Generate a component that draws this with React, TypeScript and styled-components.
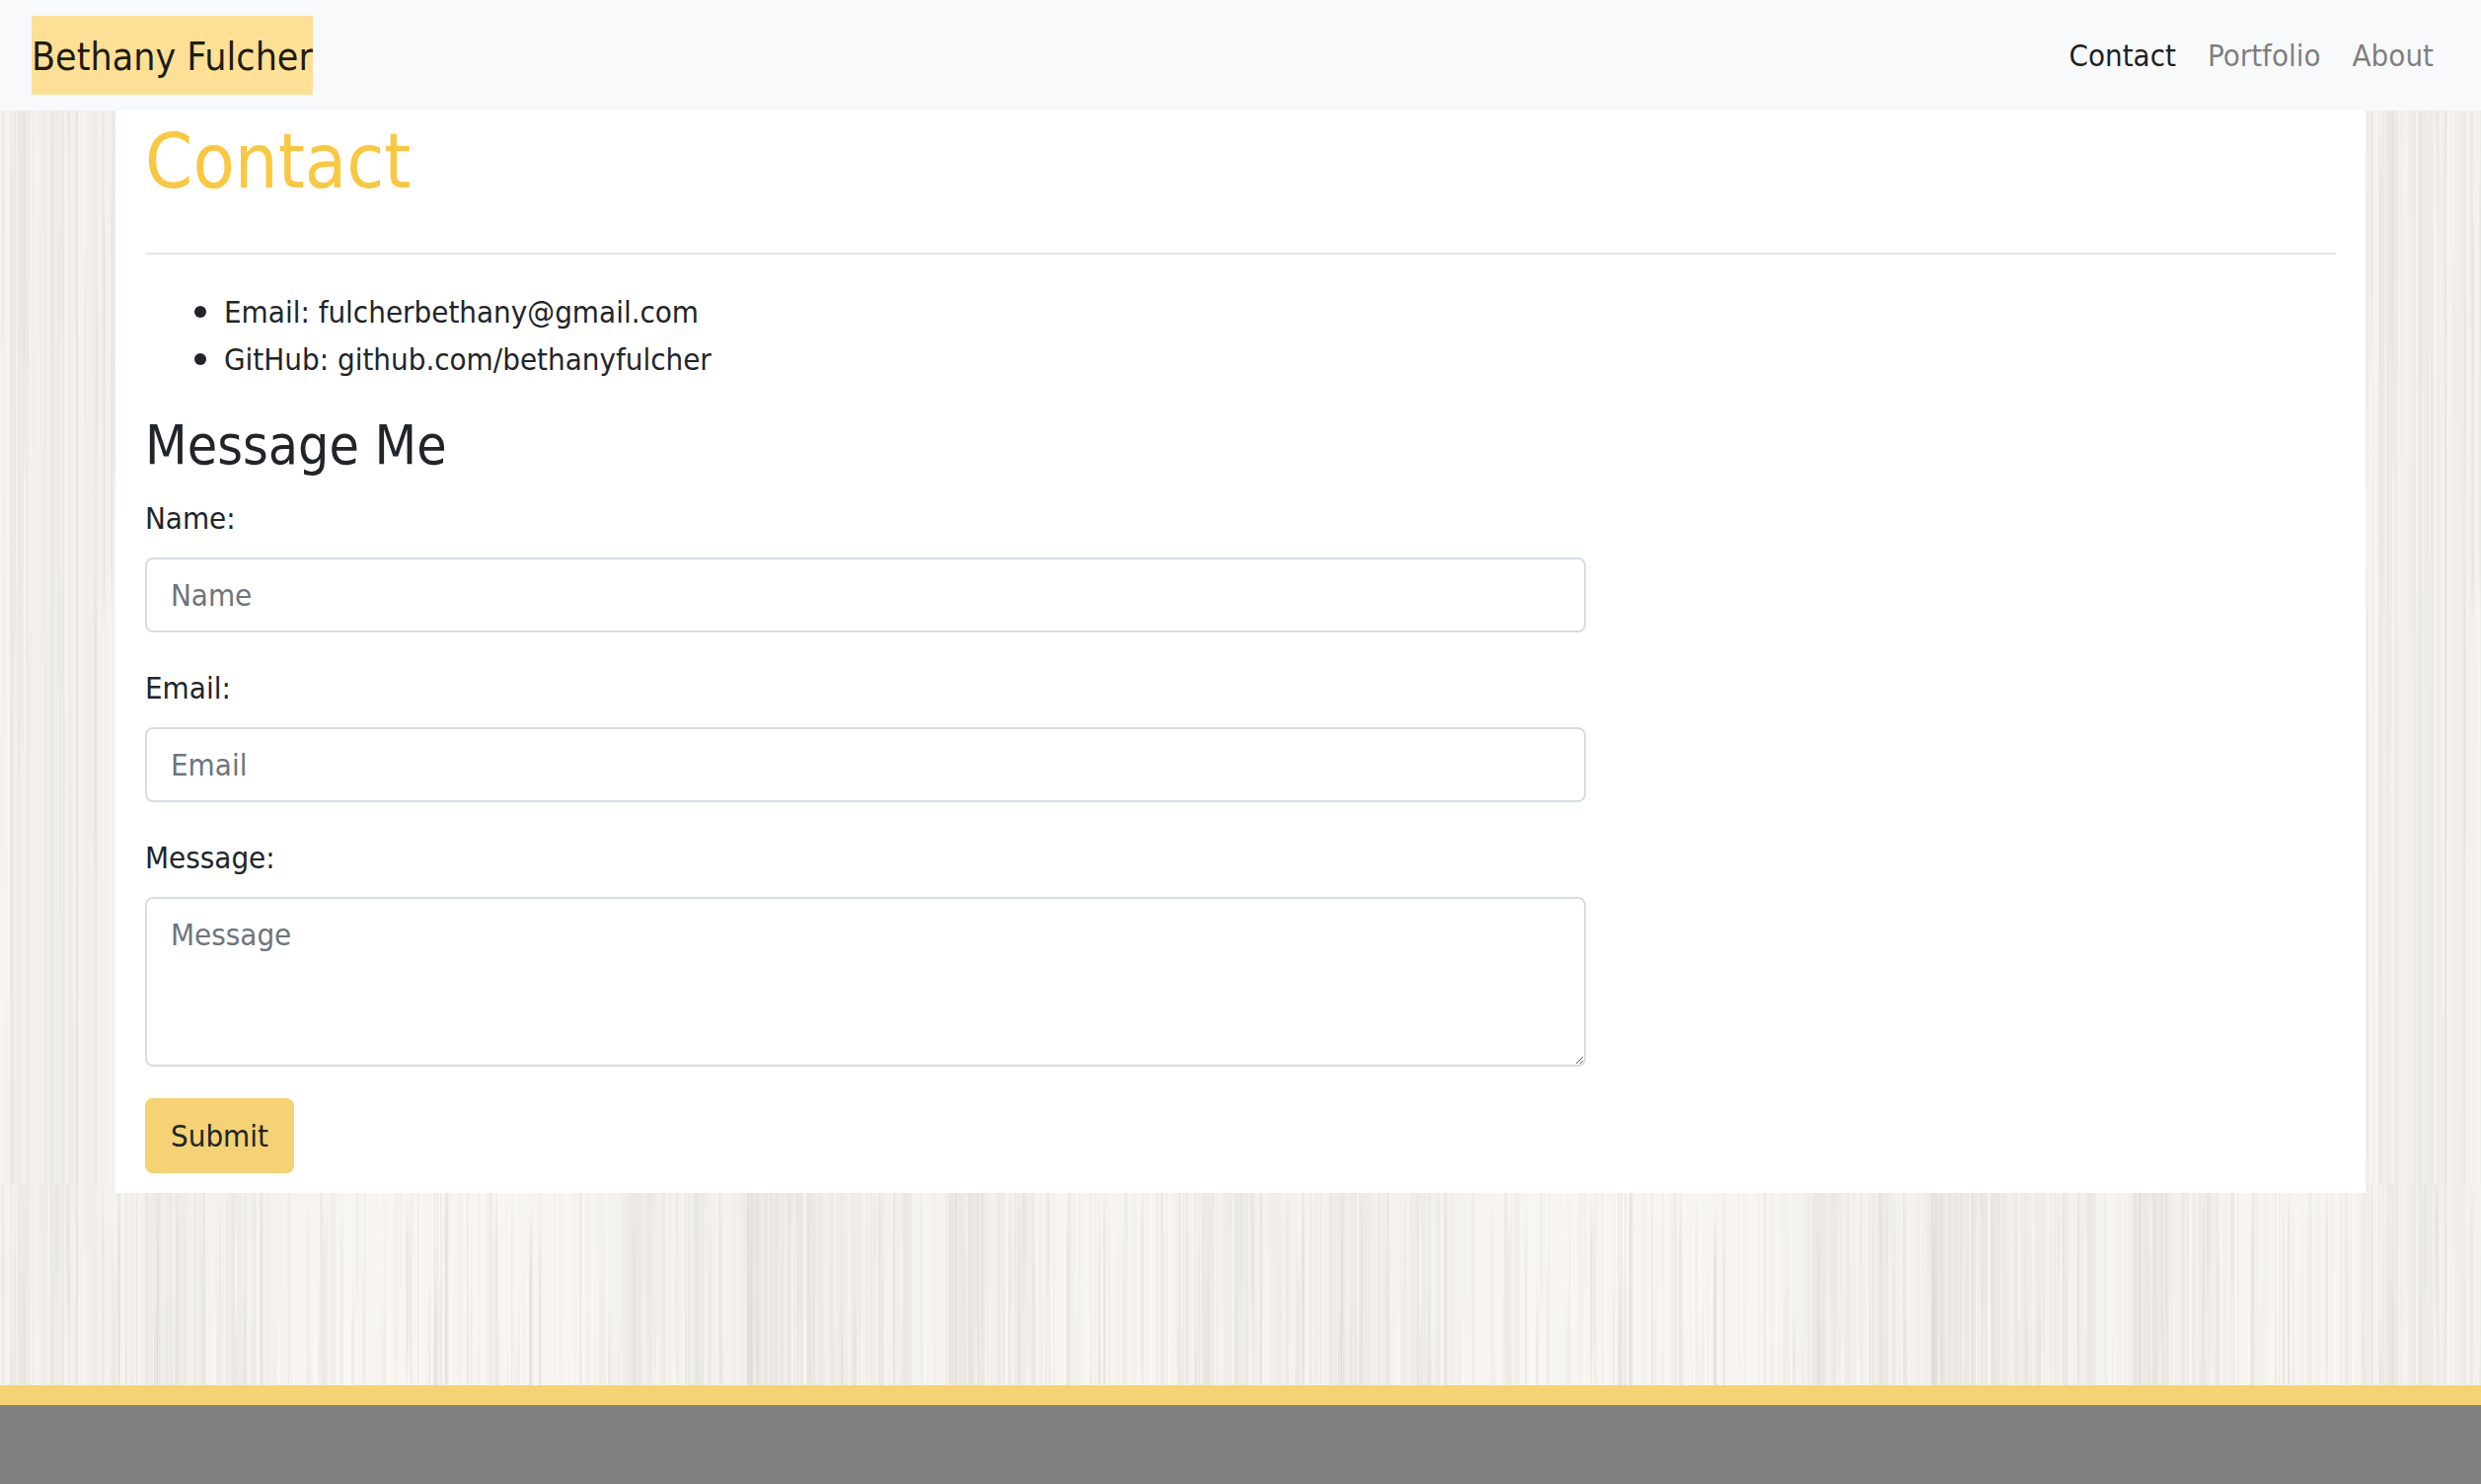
import React from 'react';
import styled, { createGlobalStyle } from 'styled-components';

const GlobalStyle = createGlobalStyle`
  *, *::before, *::after { box-sizing: border-box; }
  body {
    margin: 0;
    color: #212529;
    background: #f4f2ee;
    font-family: Tahoma, "DejaVu Sans Condensed", "DejaVu Sans", sans-serif;
    font-size: 31px;
    line-height: 48px;
  }
`;

const Page = styled.div`
  position: relative;
  isolation: isolate;
  display: flex;
  flex-direction: column;
  min-height: 100vh;
`;

const Backdrop = styled.svg`
  position: absolute;
  inset: 0;
  z-index: -1;
  width: 100%;
  height: 100%;
`;

const Navbar = styled.nav`
  display: flex;
  align-items: center;
  justify-content: space-between;
  padding: 16px 32px;
  background: #f8f9fb;
`;

const Brand = styled.a`
  padding: 18px 0 14px;
  color: rgba(0, 0, 0, 0.9);
  background: #fde096;
  font-size: 39px;
  text-decoration: none;
  white-space: nowrap;
`;

const NavList = styled.ul`
  display: flex;
  margin: 0;
  padding: 0;
  list-style: none;
`;

const NavLink = styled.a<{ $active?: boolean }>`
  display: block;
  padding: 16px;
  color: ${({ $active }) => ($active ? 'rgba(0, 0, 0, 0.9)' : 'rgba(0, 0, 0, 0.5)')};
  text-decoration: none;
`;

const Panel = styled.main`
  width: 100%;
  max-width: 2280px;
  margin: 0 auto;
  padding: 0 30px 20px;
  background: #fff;
`;

const Title = styled.h1`
  margin: 0;
  color: #f9c740;
  font-size: 77px;
  font-weight: 400;
  line-height: 104px;
`;

const Divider = styled.hr`
  height: 2px;
  margin: 40px 0 32px;
  border: 0;
  background: #e5e5e5;
`;

const ContactList = styled.ul`
  margin: 0 0 32px;
  padding-left: 80px;
  li { height: 48px; }
  li::marker { font-size: 38px; }
`;

const Subtitle = styled.h3`
  margin: 0 0 16px;
  font-size: 55px;
  font-weight: 400;
  line-height: 67px;
`;

const Columns = styled.div`
  display: grid;
  grid-template-columns: repeat(12, 1fr);
  column-gap: 60px;
`;

const Form = styled.form`
  display: flex;
  flex-direction: column;
  align-items: flex-start;
  gap: 32px;
  grid-column: span 8;
`;

const Field = styled.div`
  display: flex;
  flex-direction: column;
  gap: 16px;
  width: 100%;
`;

const Control = styled.input`
  display: block;
  width: 100%;
  height: ${({ as }) => (as === 'textarea' ? '172px' : '76px')};
  padding: 12px 24px;
  color: #495057;
  background: #fff;
  border: 2px solid #d8dde2;
  border-radius: 8px;
  font: inherit;
  &::placeholder { color: #6c757d; opacity: 1; }
`;

const SubmitButton = styled.button`
  padding: 14px 26px;
  color: #212529;
  background: #f5d273;
  border: 0;
  border-radius: 8px;
  font: inherit;
`;

const Footer = styled.footer`
  height: 100px;
  margin-top: auto;
  border-top: 20px solid #f5d273;
  background: #808080;
`;

/* Wide tonal bands of the wood: start, width, colour, opacity */
const BANDS: [number, number, string, number][] = [
  [17, 13, '#dcd0cc', 0.3], [40, 32, '#d9d7d3', 0.25], [90, 4, '#cfcdc9', 0.3],
  [150, 40, '#d9d7d3', 0.22], [230, 26, '#d9d7d3', 0.22],
  [300, 300, '#fbf9f4', 0.45], [640, 26, '#d6d3d0', 0.3], [694, 22, '#d9d7d3', 0.25],
  [752, 82, '#dcd5d2', 0.3], [846, 24, '#d9d7d3', 0.22], [886, 6, '#d0cecb', 0.3],
  [912, 10, '#d0cecb', 0.3], [962, 38, '#dad1ce', 0.3], [1030, 12, '#d9d3d0', 0.22],
  [1060, 130, '#fbf9f4', 0.3],
];

const GRAIN = (() => {
  let seed = 41;
  const next = () => {
    seed = (seed * 16807) % 2147483647;
    return seed / 2147483647;
  };
  return Array.from({ length: 1100 }, () => {
    const x = Math.round(next() * 1200);
    const light = next() < 0.5;
    const y = -100 + Math.round(next() * next() * 1250);
    return {
      x,
      y,
      width: 1 + Math.round(next() * next() * 4),
      height: next() < 0.5 ? 1300 - y : 150 + Math.round(next() * 600),
      fill: light ? '#fdfaf5' : next() < 0.3 ? '#d8cbc7' : '#d0cdc8',
      opacity: light ? 0.2 + next() * 0.25 : 0.08 + next() * 0.18,
    };
  });
})();

function WoodBackdrop() {
  return (
    <Backdrop aria-hidden="true">
      <defs>
        <filter id="soften" x="-10%" y="0" width="120%" height="100%">
          <feGaussianBlur stdDeviation="4 0" />
        </filter>
        <filter id="grain" filterUnits="userSpaceOnUse" x="-20" y="-100" width="1240" height="1400">
          <feGaussianBlur stdDeviation="0.6 20" />
        </filter>
        <pattern id="wood" width="1200" height="1200" patternUnits="userSpaceOnUse">
          <rect width="1200" height="1200" fill="#f4f2ee" />
          <g filter="url(#soften)">
            {BANDS.map(([x, width, fill, opacity]) => (
              <rect key={x} x={x} width={width} height="1200" fill={fill} opacity={opacity} />
            ))}
          </g>
          <g filter="url(#grain)">
            {GRAIN.map((g, i) => <rect key={i} {...g} />)}
          </g>
        </pattern>
      </defs>
      <rect width="100%" height="100%" fill="url(#wood)" />
    </Backdrop>
  );
}

export default function App() {
  return (
    <>
      <GlobalStyle />
      <Page>
        <WoodBackdrop />
        <Navbar>
          <Brand href="#home">Bethany Fulcher</Brand>
          <NavList>
            <li><NavLink href="#contact" $active>Contact</NavLink></li>
            <li><NavLink href="#portfolio">Portfolio</NavLink></li>
            <li><NavLink href="#about">About</NavLink></li>
          </NavList>
        </Navbar>
        <Panel>
          <Title>Contact</Title>
          <Divider />
          <ContactList>
            <li>Email: fulcherbethany@gmail.com</li>
            <li>GitHub: github.com/bethanyfulcher</li>
          </ContactList>
          <Subtitle>Message Me</Subtitle>
          <Columns>
            <Form onSubmit={(e) => e.preventDefault()}>
              <Field>
                <label htmlFor="name">Name:</label>
                <Control id="name" type="text" placeholder="Name" />
              </Field>
              <Field>
                <label htmlFor="email">Email:</label>
                <Control id="email" type="email" placeholder="Email" />
              </Field>
              <Field>
                <label htmlFor="message">Message:</label>
                <Control as="textarea" id="message" placeholder="Message" />
              </Field>
              <SubmitButton type="submit">Submit</SubmitButton>
            </Form>
          </Columns>
        </Panel>
        <Footer />
      </Page>
    </>
  );
}
